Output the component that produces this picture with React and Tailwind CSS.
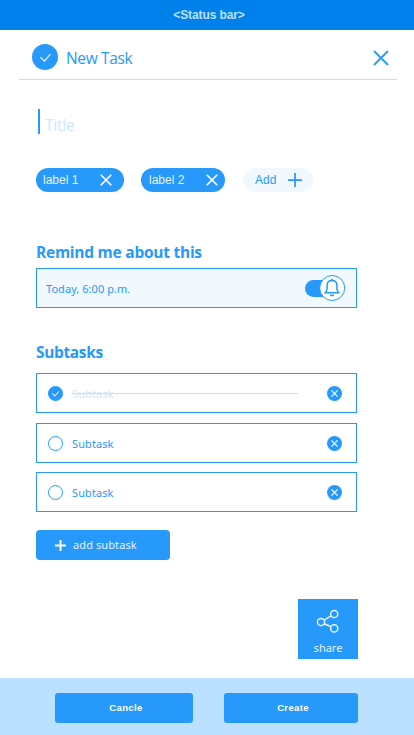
import React from "react";

const SEGOE = "font-['Noto_Sans','Open_Sans',sans-serif]";
const HEADING = "font-['Open_Sans','Noto_Sans',sans-serif]";
const ARIAL = "font-['Liberation_Sans',Arial,sans-serif]";

function Cross({ size, width = 1.5, className = "" }) {
  return (
    <svg width={size} height={size} viewBox="0 0 16 16" className={`shrink-0 ${className}`} fill="none" stroke="currentColor" strokeWidth={width}>
      <path d="M1 1 15 15M15 1 1 15" />
    </svg>
  );
}

function Plus({ size, width, className = "" }) {
  return (
    <svg width={size} height={size} viewBox="0 0 16 16" className={`shrink-0 ${className}`} fill="none" stroke="currentColor" strokeWidth={width}>
      <path d="M8 0V16M0 8H16" />
    </svg>
  );
}

function Chip({ children, className }) {
  return (
    <div className={`flex h-6 items-center justify-between rounded-full bg-[#2699fb] text-[#e5f3ff] ${className}`}>
      <span className={`text-[12px] leading-6 ${ARIAL}`}>{children}</span>
      <Cross size={12} width={2.2} className="text-white" />
    </div>
  );
}

function Check({ done }) {
  return (
    <svg width="15" height="15" viewBox="0 0 15 15" className="shrink-0" fill="none">
      <circle cx="7.5" cy="7.5" r="7" fill={done ? "#2699fb" : "white"} stroke="#2699fb" strokeWidth="1" />
      {done && <path d="M4.3 7.5 6.8 9.9 10.9 5.5" stroke="#d5ebff" strokeWidth="1.1" />}
    </svg>
  );
}

function Subtask({ done, className = "" }) {
  return (
    <div className={`flex h-10 w-[321px] items-center border border-[#2699fb] pl-[11px] pr-[14px] ${className}`}>
      <Check done={done} />
      <div className={`relative ml-[9px] h-4 w-[226px] text-[11px] leading-4 tracking-[0.1px] ${SEGOE} ${done ? "text-[#cde8ff]" : "text-[#2699fb]"}`}>
        <span className="relative top-px">Subtask</span>
        {done && <span className="absolute left-0 top-[8px] h-px w-full bg-[#bce0fd]" />}
      </div>
      <div className="ml-auto flex size-[15px] items-center justify-center rounded-full bg-[#2699fb] text-white">
        <Cross size={7} width={2.8} />
      </div>
    </div>
  );
}

export default function App() {
  return (
    <div className={`flex h-[735px] w-[414px] flex-col overflow-hidden bg-white text-[#2699fb] ${SEGOE}`}>
      <div className={`flex h-[30px] shrink-0 items-center justify-center bg-[#0080ea] pb-px pl-1 text-[12px] font-bold tracking-[-0.1px] text-[#bce0fd] ${ARIAL}`}>
        &lt;Status bar&gt;
      </div>

      <header className="ml-[19px] mr-[17px] flex h-[50px] shrink-0 items-center border-b border-[#bce0fd] pl-[13px] pr-2">
        <svg width="26" height="26" viewBox="0 0 26 26" className="mt-[5px]" fill="none">
          <circle cx="13" cy="13" r="13" fill="#2699fb" />
          <path d="m8.3 13.2 4.1 4L18.5 10" stroke="white" strokeWidth="1.1" />
        </svg>
        <span className={`ml-2 mt-[6px] text-[15.5px] leading-5 tracking-[-0.35px] ${HEADING}`}>New Task</span>
        <Cross size={16} width={1.8} className="ml-auto mt-[6px]" />
      </header>

      <main className="flex h-[598px] shrink-0 flex-col pl-9 pr-14">
        <div className="ml-[2px] mt-[29px] flex h-[25px]">
          <span className="w-[2px] bg-[#2699fb]" />
          <span className={`ml-[5px] mt-[6px] text-[15.5px] leading-5 tracking-[-0.2px] text-[#cde8ff] ${HEADING}`}>Title</span>
        </div>

        <div className="mt-[34px] flex h-6">
          <Chip className="w-[88px] pl-[7px] pr-[12px]">label 1</Chip>
          <Chip className="ml-[17px] w-[84px] pl-2 pr-[7px]">label 2</Chip>
          <div className={`ml-[18px] flex h-6 w-[70px] items-center justify-between rounded-full bg-[#f1f9ff] pl-3 pr-[11px] text-[12px] ${ARIAL}`}>
            Add
            <Plus size={14} width={2} />
          </div>
        </div>

        <h2 className={`mt-[49px] h-[27px] text-[15.5px] font-bold leading-[22px] tracking-[-0.25px] ${HEADING}`}>Remind me about this</h2>
        <div className="flex h-10 w-[321px] shrink-0 items-center justify-between border border-[#2699fb] bg-[#f1f9ff] pl-[9px] pr-[10px]">
          <span className="mt-[2px] text-[11px] leading-4 tracking-[0.05px]">Today, 6:00 p.m.</span>
          <svg width="41" height="26" viewBox="0 0 41 26" fill="none">
            <rect x="0" y="5" width="36" height="17" rx="8.5" fill="#2699fb" />
            <circle cx="27.2" cy="13" r="12.5" fill="white" stroke="#2699fb" />
            <path d="M19.9 17.8h14.2q-2.2-1.6-2.2-4.2v-3c0-3-2-5-4.9-5s-4.9 2-4.9 5v3q0 2.6-2.2 4.2z" stroke="#2699fb" strokeWidth="1.5" strokeLinejoin="round" />
            <path d="M27 3.8v2M25.3 20q1.7 1 3.4 0" stroke="#2699fb" strokeWidth="1.7" />
          </svg>
        </div>

        <h2 className={`mt-[33px] h-8 text-[15.5px] font-bold leading-[22px] tracking-[-0.35px] ${HEADING}`}>Subtasks</h2>
        <Subtask done />
        <Subtask className="mt-[10px]" />
        <Subtask className="mt-[9px]" />

        <button className="mt-[18px] flex h-[30px] w-[134px] items-center rounded-[4px] bg-[#2699fb] pl-[19px] text-[11px] tracking-[0.1px] text-[#e5f3ff]">
          <Plus size={11} width={2.8} className="mr-[7px] text-white" />
          add subtask
        </button>

        <button className="mt-[39px] flex h-[60px] w-[60px] flex-col items-center self-end bg-[#2699fb] pt-[10px] text-[#e5f3ff]">
          <svg width="24" height="24" viewBox="0 0 24 24" fill="none" stroke="currentColor" strokeWidth="1.5">
            <circle cx="5" cy="13" r="3.6" />
            <circle cx="18.2" cy="5" r="3.6" />
            <circle cx="18.2" cy="19.4" r="3.6" />
            <path d="m8.1 11.1 7-4.2M8.1 14.8l7 3" />
          </svg>
          <span className="mt-[7px] text-[11px] leading-4">share</span>
        </button>
      </main>

      <footer className={`flex h-[57px] shrink-0 bg-[#bce0ff] pl-[55px] pt-[15px] text-[9.5px] font-bold tracking-[0.35px] text-white ${ARIAL}`}>
        <button className="h-[30px] w-[138px] rounded-[3px] bg-[#2699fb] pl-1 pt-px">Cancle</button>
        <button className="ml-[31px] h-[30px] w-[134px] rounded-[3px] bg-[#2699fb] pl-1 pt-px">Create</button>
      </footer>
    </div>
  );
}
